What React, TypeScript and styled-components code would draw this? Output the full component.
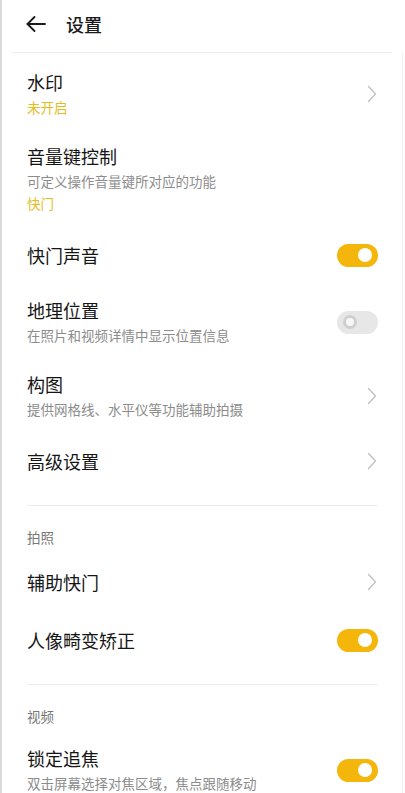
import * as React from 'react';
import styled, { createGlobalStyle } from 'styled-components';

const GlobalStyle = createGlobalStyle`
    html, body {
        margin: 0;
        padding: 0;
        background: #ffffff;
    }
    body {
        font-family: "Noto Sans CJK SC", "Noto Sans", sans-serif;
        -webkit-font-smoothing: antialiased;
    }
`;

const Page = styled.div`
    width: 405px;
    height: 793px;
    overflow: hidden;
    box-sizing: border-box;
    border-left: 2px solid #dadada;
    background: #fff;
`;

const Header = styled.div`
    height: 53px;
    box-sizing: border-box;
    display: flex;
    align-items: center;
    padding: 0 0 5px 14px;
    gap: 20px;
    margin: 0 13px 0 10px;
    border-bottom: 1px solid #ececec;
`;

const BackButton = styled.div`
    display: flex;
    align-items: center;
    width: 20px;
    height: 20px;
    color: #1a1a1a;
`;

const Title = styled.div`
    font-size: 18px;
    font-weight: 500;
    color: #1a1a1a;
    line-height: 24px;
`;

const List = styled.div`
    padding: 3px 24px 0 25px;
    margin-right: 2px;
    border-right: 1px solid #f0f0f0;
    height: 740px;
`;

const Row = styled.div<{ $single?: boolean }>`
    display: flex;
    align-items: center;
    justify-content: space-between;
    padding: ${p => (p.$single ? '17px 0 17px' : '14px 0 12px')};
`;

const RowText = styled.div`
    display: flex;
    flex-direction: column;
`;

const RowTitle = styled.div`
    font-size: 18px;
    line-height: 24px;
    color: #151515;
`;

const RowSub = styled.div<{ $accent?: boolean; $first?: boolean }>`
    font-size: 13.5px;
    line-height: 22px;
    color: ${p => (p.$accent ? '#e3bd1f' : '#8c8c8c')};
    margin-top: ${p => (p.$first ? '2px' : '0')};
`;

const Divider = styled.div`
    height: 1px;
    background: #ececec;
    margin: 15px 0 0;
`;

const SectionLabel = styled.div`
    font-size: 13.5px;
    line-height: 20px;
    color: #777;
    margin: 21px 0 6px;
`;

const Toggle = styled.div<{ $on?: boolean }>`
    position: relative;
    width: 41px;
    height: 23px;
    border-radius: 12px;
    flex-shrink: 0;
    background: ${p => (p.$on ? '#f5b60c' : '#e7e7e7')};

    &::after {
        content: '';
        position: absolute;
        top: 4.5px;
        width: 14px;
        height: 14px;
        border-radius: 50%;
        box-sizing: border-box;
        left: ${p => (p.$on ? '21px' : '6px')};
        background: ${p => (p.$on ? '#ffffff' : '#f7f7f7')};
        border: ${p => (p.$on ? 'none' : '3px solid #cfcfcf')};
    }
`;

const Chevron = styled.svg`
    flex-shrink: 0;
    margin-right: 1px;
`;

const ArrowIcon = () => (
    <svg width="20" height="16" viewBox="0 0 20 16" fill="none" stroke="currentColor" strokeWidth="1.8" strokeLinecap="round" strokeLinejoin="round">
        <path d="M19 8H1.5" />
        <path d="M8.5 1L1.5 8l7 7" />
    </svg>
);

const ChevronIcon = () => (
    <Chevron width="10" height="18" viewBox="0 0 10 18" fill="none" stroke="#c2c2c2" strokeWidth="1.4" strokeLinecap="round" strokeLinejoin="round">
        <path d="M1.5 1.5L8.5 9l-7 7.5" />
    </Chevron>
);

interface IItem {
    title: string;
    subs?: { text: string; accent?: boolean }[];
    control: 'chevron' | 'on' | 'off' | 'none';
}

const renderControl = (control: IItem['control']) => {
    if (control === 'chevron') {
        return <ChevronIcon />;
    }
    if (control === 'none') {
        return null;
    }
    return <Toggle $on={control === 'on'} />;
};

const renderRow = (item: IItem) => (
    <Row key={item.title} $single={!item.subs}>
        <RowText>
            <RowTitle>{item.title}</RowTitle>
            {item.subs && item.subs.map((s, i) => (
                <RowSub key={i} $accent={s.accent} $first={i === 0}>{s.text}</RowSub>
            ))}
        </RowText>
        {renderControl(item.control)}
    </Row>
);

const general: IItem[] = [
    { title: '水印', subs: [{ text: '未开启', accent: true }], control: 'chevron' },
    {
        title: '音量键控制',
        subs: [{ text: '可定义操作音量键所对应的功能' }, { text: '快门', accent: true }],
        control: 'none'
    },
    { title: '快门声音', control: 'on' },
    { title: '地理位置', subs: [{ text: '在照片和视频详情中显示位置信息' }], control: 'off' },
    { title: '构图', subs: [{ text: '提供网格线、水平仪等功能辅助拍摄' }], control: 'chevron' },
    { title: '高级设置', control: 'chevron' }
];

const photo: IItem[] = [
    { title: '辅助快门', control: 'chevron' },
    { title: '人像畸变矫正', control: 'on' }
];

const video: IItem[] = [
    { title: '锁定追焦', subs: [{ text: '双击屏幕选择对焦区域，焦点跟随移动' }], control: 'on' }
];

export default function App() {
    return (
        <Page>
            <GlobalStyle />
            <Header>
                <BackButton>
                    <ArrowIcon />
                </BackButton>
                <Title>设置</Title>
            </Header>
            <List>
                {general.map(renderRow)}
                <Divider />
                <SectionLabel>拍照</SectionLabel>
                {photo.map(renderRow)}
                <Divider />
                <SectionLabel>视频</SectionLabel>
                {video.map(renderRow)}
            </List>
        </Page>
    );
}
